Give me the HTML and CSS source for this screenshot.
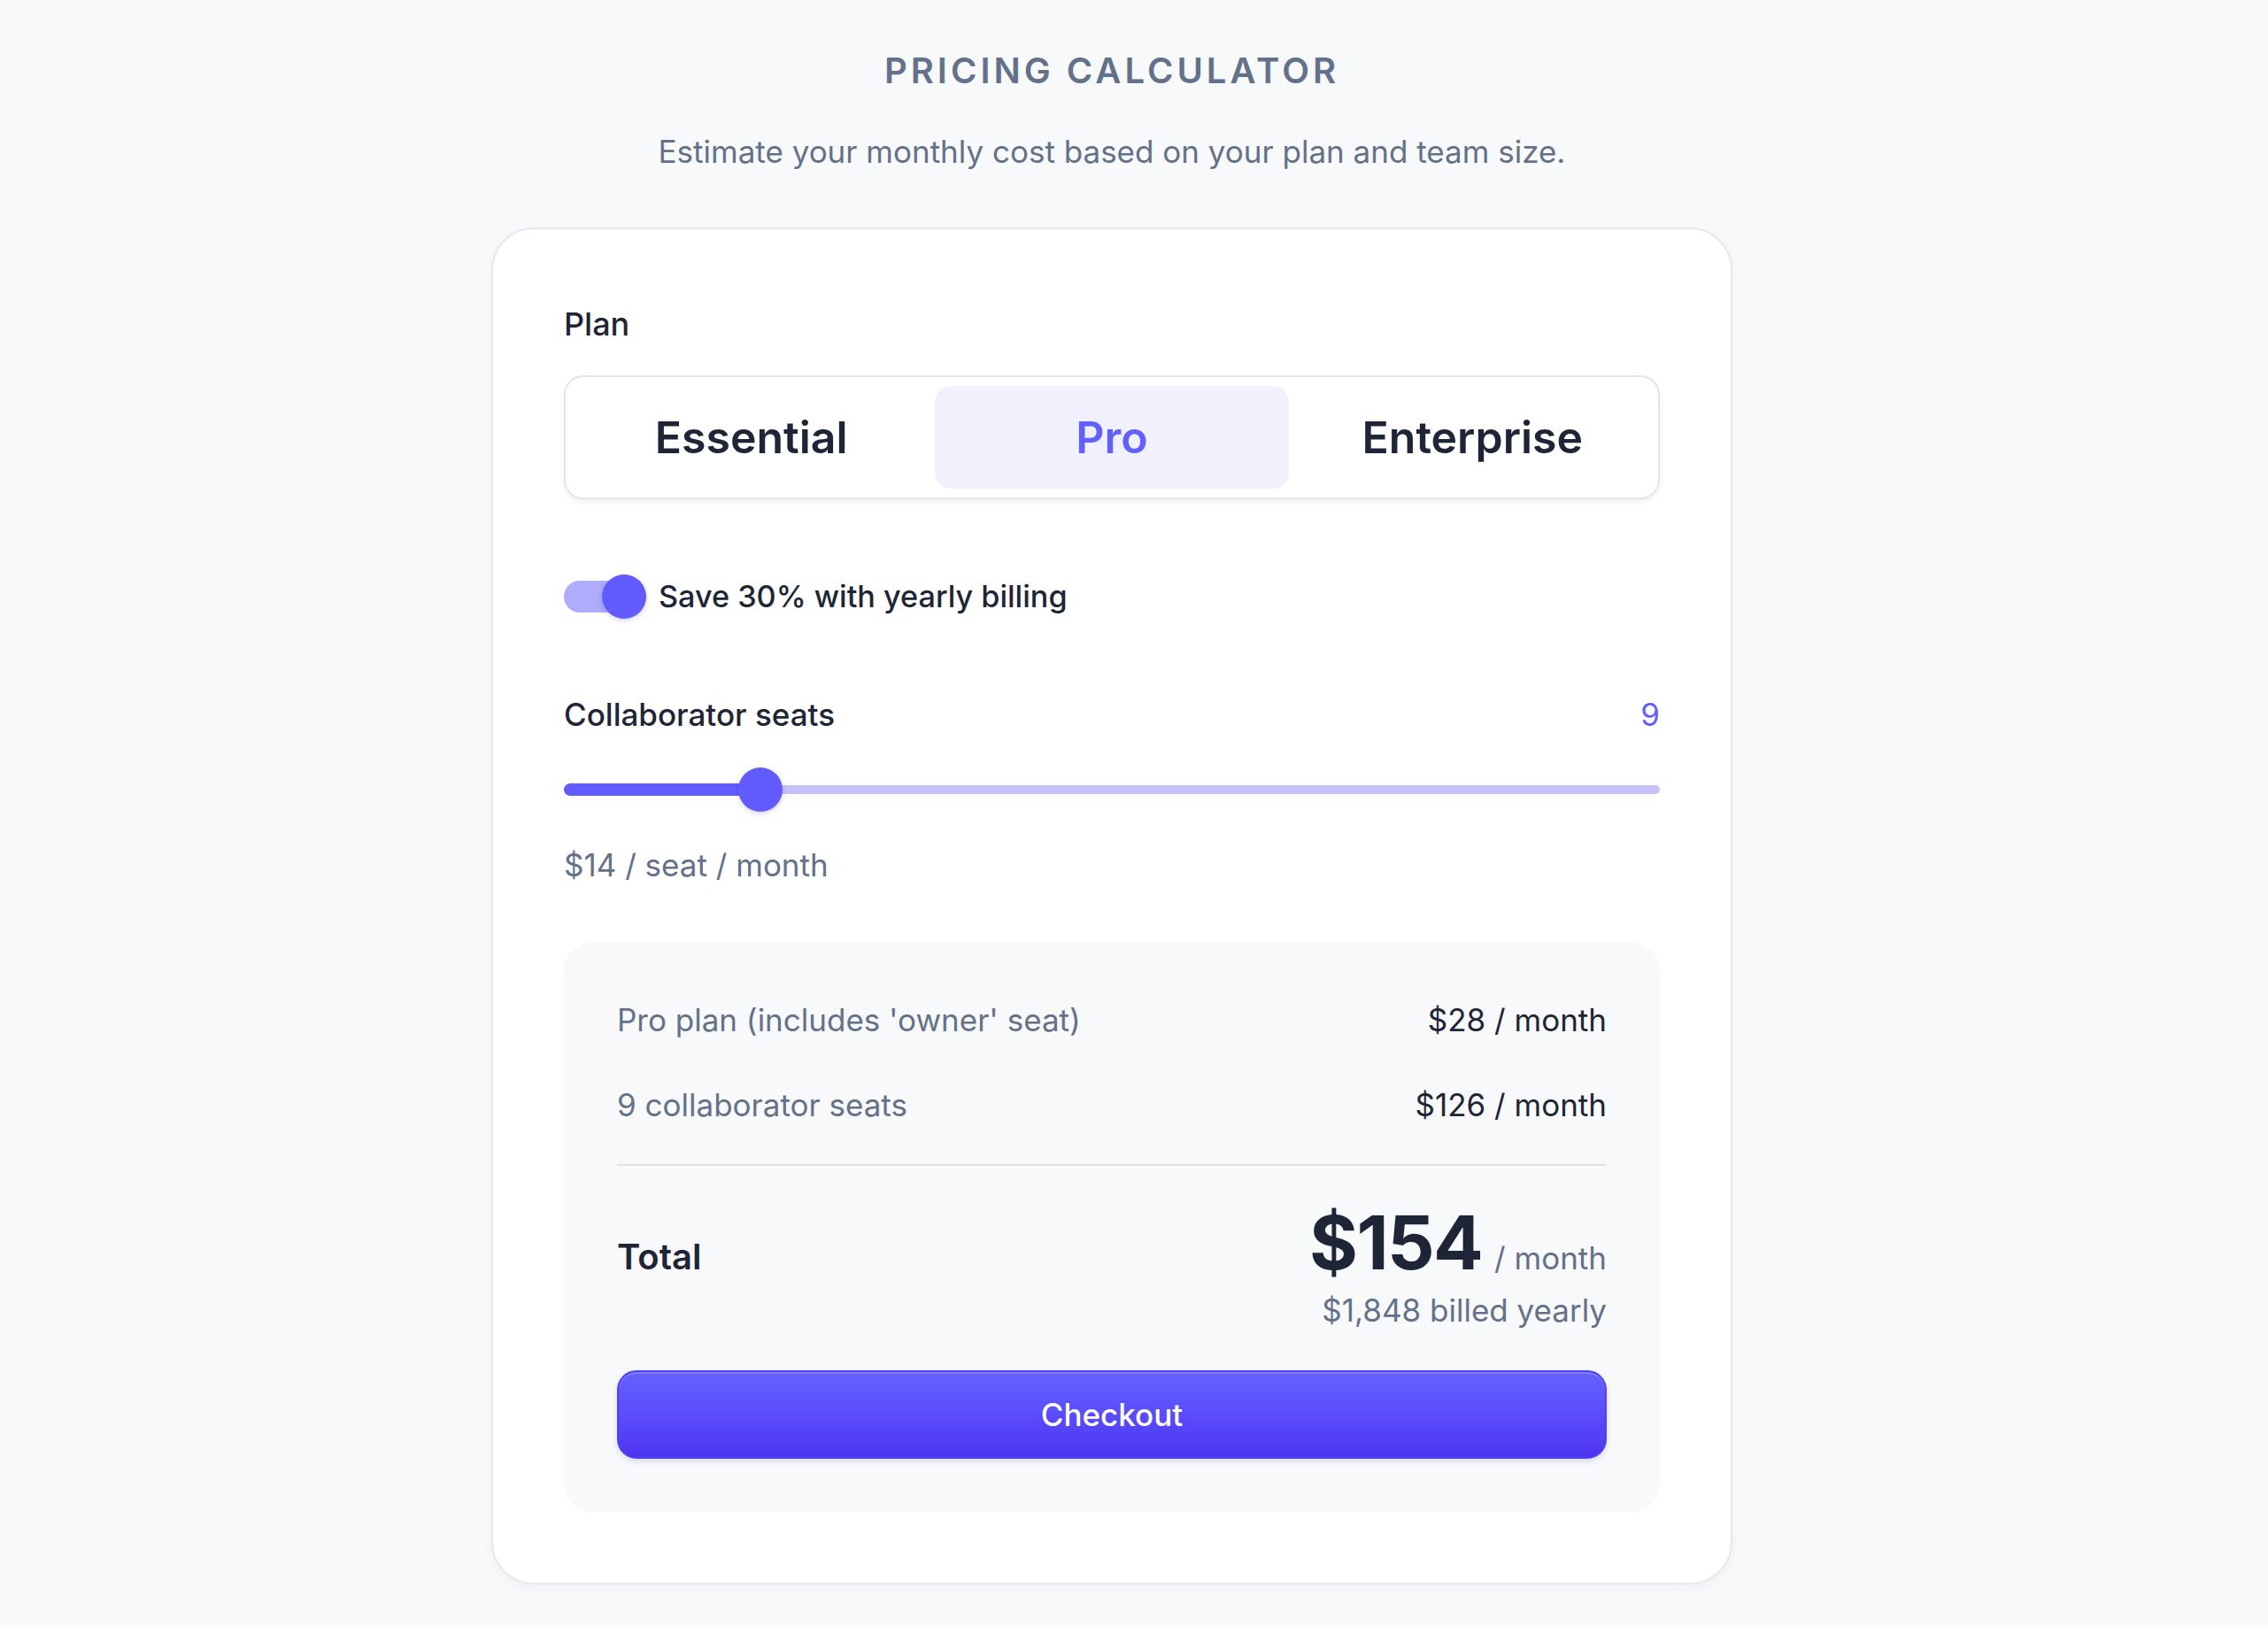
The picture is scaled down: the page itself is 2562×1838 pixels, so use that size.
FILE: index.html
```html
<!DOCTYPE html>
<html lang="en">
<head>
<meta charset="utf-8">
<title>Pricing calculator</title>
<link rel="stylesheet" href="styles.css">
</head>
<body>
<main class="page">
  <h1 class="title">PRICING CALCULATOR</h1>
  <p class="subtitle">Estimate your monthly cost based on your plan and team size.</p>

  <section class="card">
    <div class="field-label">Plan</div>
    <div class="segmented">
      <button class="segment">Essential</button>
      <button class="segment segment-active">Pro</button>
      <button class="segment">Enterprise</button>
    </div>

    <div class="toggle-row">
      <div class="toggle">
        <span class="toggle-track"></span>
        <span class="toggle-knob"></span>
      </div>
      <span class="toggle-text">Save 30% with yearly billing</span>
    </div>

    <div class="seats-head">
      <span class="seats-label">Collaborator seats</span>
      <span class="seats-value">9</span>
    </div>

    <div class="slider">
      <div class="slider-track"></div>
      <div class="slider-fill" style="width: 223px"></div>
      <div class="slider-thumb" style="left: 197px"></div>
    </div>

    <div class="seat-price">$14 / seat / month</div>

    <div class="summary">
      <div class="line">
        <span class="line-name">Pro plan (includes 'owner' seat)</span>
        <span class="line-price">$28 / month</span>
      </div>
      <div class="line line-second">
        <span class="line-name">9 collaborator seats</span>
        <span class="line-price">$126 / month</span>
      </div>
      <div class="divider"></div>
      <div class="total">
        <span class="total-label">Total</span>
        <div class="total-values">
          <div class="amount-line">
            <span class="amount">$154</span>
            <span class="per">/ month</span>
          </div>
          <div class="yearly">$1,848 billed yearly</div>
        </div>
      </div>
      <button class="checkout">Checkout</button>
    </div>
  </section>
</main>
</body>
</html>
```

FILE: styles.css
```css
* { box-sizing: border-box; }

html, body {
  margin: 0;
  padding: 0;
  background: #f8f9fb;
  font-family: Inter, "Noto Sans", "Liberation Sans", sans-serif;
  color: #1e2536;
}

.page {
  width: 1402px;
  margin-left: 555px;
  padding-top: 56px;
  padding-bottom: 48px;
  display: flex;
  flex-direction: column;
}

.title {
  margin: 0;
  text-align: center;
  font-size: 40px;
  line-height: 48px;
  font-weight: 600;
  letter-spacing: 0.1em;
  color: #64718a;
}

.subtitle {
  margin: 42px 0 0;
  text-align: center;
  font-size: 35px;
  line-height: 51px;
  font-weight: 400;
  color: #64718a;
}

.card {
  margin-top: 60px;
  background: #ffffff;
  border: 2px solid #e6e8ec;
  border-radius: 48px;
  padding: 80px;
  box-shadow: 0 4px 12px rgba(17, 24, 39, 0.04);
  display: flex;
  flex-direction: column;
}

.field-label {
  font-size: 36px;
  line-height: 54px;
  font-weight: 500;
  color: #1e2536;
}

.segmented {
  margin-top: 31px;
  height: 140px;
  border: 2px solid #e3e5ea;
  border-radius: 22px;
  padding: 10px;
  display: grid;
  grid-template-columns: 1fr 1fr 1fr;
  gap: 8px;
  box-shadow: 0 3px 6px rgba(17, 24, 39, 0.06);
  background: #ffffff;
}

.segment {
  border: 0;
  background: transparent;
  border-radius: 18px;
  font-family: inherit;
  font-size: 50px;
  font-weight: 600;
  color: #1e2536;
  padding: 0;
  cursor: pointer;
}

.segment-active {
  background: #f1f1fe;
  color: #6360ff;
}

.toggle-row {
  margin-top: 84.5px;
  height: 50px;
  display: flex;
  align-items: center;
  gap: 14px;
}

.toggle {
  position: relative;
  width: 93px;
  height: 50px;
  flex: none;
}

.toggle-track {
  position: absolute;
  left: 0;
  top: 7px;
  width: 88px;
  height: 36px;
  border-radius: 18px;
  background: #afacfc;
}

.toggle-knob {
  position: absolute;
  left: 43px;
  top: 0;
  width: 50px;
  height: 50px;
  border-radius: 50%;
  background: #625bff;
  box-shadow: 0 2px 6px rgba(30, 20, 120, 0.18);
}

.toggle-text {
  font-size: 34.2px;
  line-height: 50px;
  font-weight: 500;
  color: #1e2536;
}

.seats-head {
  margin-top: 81.5px;
  display: flex;
  justify-content: space-between;
  align-items: center;
  font-size: 35px;
  line-height: 54px;
}

.seats-label {
  font-weight: 500;
  color: #1e2536;
}

.seats-value {
  color: #6360ff;
  font-weight: 400;
}

.slider {
  position: relative;
  margin-top: 33px;
  height: 50px;
}

.slider-track {
  position: absolute;
  left: 0;
  right: 0;
  top: 20px;
  height: 10px;
  border-radius: 5px;
  background: #c4c1fc;
}

.slider-fill {
  position: absolute;
  left: 0;
  top: 18px;
  height: 14px;
  border-radius: 7px;
  background: #625bff;
}

.slider-thumb {
  position: absolute;
  top: 0;
  width: 50px;
  height: 50px;
  border-radius: 50%;
  background: #625bff;
  box-shadow: 0 2px 6px rgba(30, 20, 120, 0.18);
}

.seat-price {
  margin-top: 33px;
  font-size: 35px;
  line-height: 54px;
  color: #64718a;
}

.summary {
  margin-top: 61px;
  background: #f8f9fb;
  border-radius: 32px;
  padding: 60px;
  display: flex;
  flex-direction: column;
}

.line {
  display: flex;
  justify-content: space-between;
  align-items: center;
  font-size: 35px;
  line-height: 54px;
}

.line-second {
  margin-top: 42px;
}

.line-name {
  color: #64718a;
}

.line-price {
  color: #1e2536;
}

.divider {
  margin-top: 40px;
  height: 2px;
  background: #e1e3e8;
}

.total {
  margin-top: 45px;
  display: flex;
  justify-content: space-between;
  align-items: baseline;
}

.total-label {
  font-size: 40px;
  font-weight: 600;
  color: #1e2536;
}

.total-values {
  display: flex;
  flex-direction: column;
  align-items: flex-end;
}

.amount-line {
  display: flex;
  align-items: baseline;
  gap: 14px;
}

.amount {
  font-size: 84px;
  line-height: 1;
  font-weight: 700;
  letter-spacing: -0.02em;
  color: #1e2536;
}

.per {
  font-size: 35px;
  line-height: 48px;
  color: #64718a;
}

.yearly {
  margin-top: 10px;
  font-size: 35px;
  line-height: 48px;
  color: #64718a;
}

.checkout {
  margin-top: 44px;
  height: 100px;
  border: 2px solid #5141f2;
  border-radius: 22px;
  background: linear-gradient(180deg, #6660ff 0%, #5a4cfb 50%, #4d35f0 100%);
  box-shadow: inset 0 2px 0 rgba(255, 255, 255, 0.18), 0 3px 6px rgba(40, 30, 160, 0.14);
  color: #ffffff;
  font-family: inherit;
  font-size: 35px;
  font-weight: 500;
  cursor: pointer;
}
```
